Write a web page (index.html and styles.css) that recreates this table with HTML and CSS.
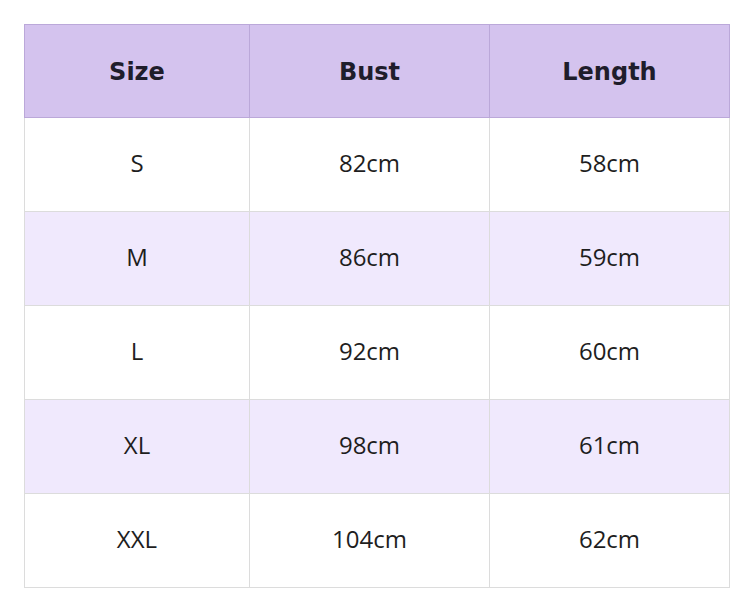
FILE: index.html
```html
<!DOCTYPE html>
<html>
<head>
<meta charset="utf-8">
<link rel="stylesheet" href="styles.css">
</head>
<body>
<table class="size-table">
  <colgroup>
    <col class="col-size">
    <col class="col-bust">
    <col class="col-length">
  </colgroup>
  <thead>
    <tr class="head-row"><th>Size</th><th>Bust</th><th>Length</th></tr>
  </thead>
  <tbody>
    <tr class="body-row"><td>S</td><td>82cm</td><td>58cm</td></tr>
    <tr class="body-row"><td>M</td><td>86cm</td><td>59cm</td></tr>
    <tr class="body-row"><td>L</td><td>92cm</td><td>60cm</td></tr>
    <tr class="body-row"><td>XL</td><td>98cm</td><td>61cm</td></tr>
    <tr class="body-row"><td>XXL</td><td>104cm</td><td>62cm</td></tr>
  </tbody>
</table>
</body>
</html>
```

FILE: styles.css
```css
html, body {
  margin: 0;
  background: #ffffff;
}
body {
  padding: 24px;
}
.size-table {
  border-collapse: collapse;
  table-layout: fixed;
  width: 706px;
}
.col-size { width: 225px; }
.col-bust { width: 240px; }
.col-length { width: 240px; }
.head-row { height: 93px; }
.body-row { height: 94px; }
.size-table th,
.size-table td {
  border: 1px solid #dcdcdc;
  text-align: center;
  padding: 0;
  line-height: 30px;
}
.size-table th {
  padding-top: 2px;
  background: #d4c3ee;
  border-color: #bba8d9;
  font-family: "DejaVu Sans", Verdana, sans-serif;
  font-weight: bold;
  font-size: 24px;
  color: #1f1d2b;
}
.size-table td {
  padding-bottom: 3px;
  font-family: "Open Sans", "Segoe UI", sans-serif;
  font-size: 24px;
  color: #1e1e1e;
}
.size-table tbody tr:nth-child(even) td {
  background: #f0e9fd;
}
```
